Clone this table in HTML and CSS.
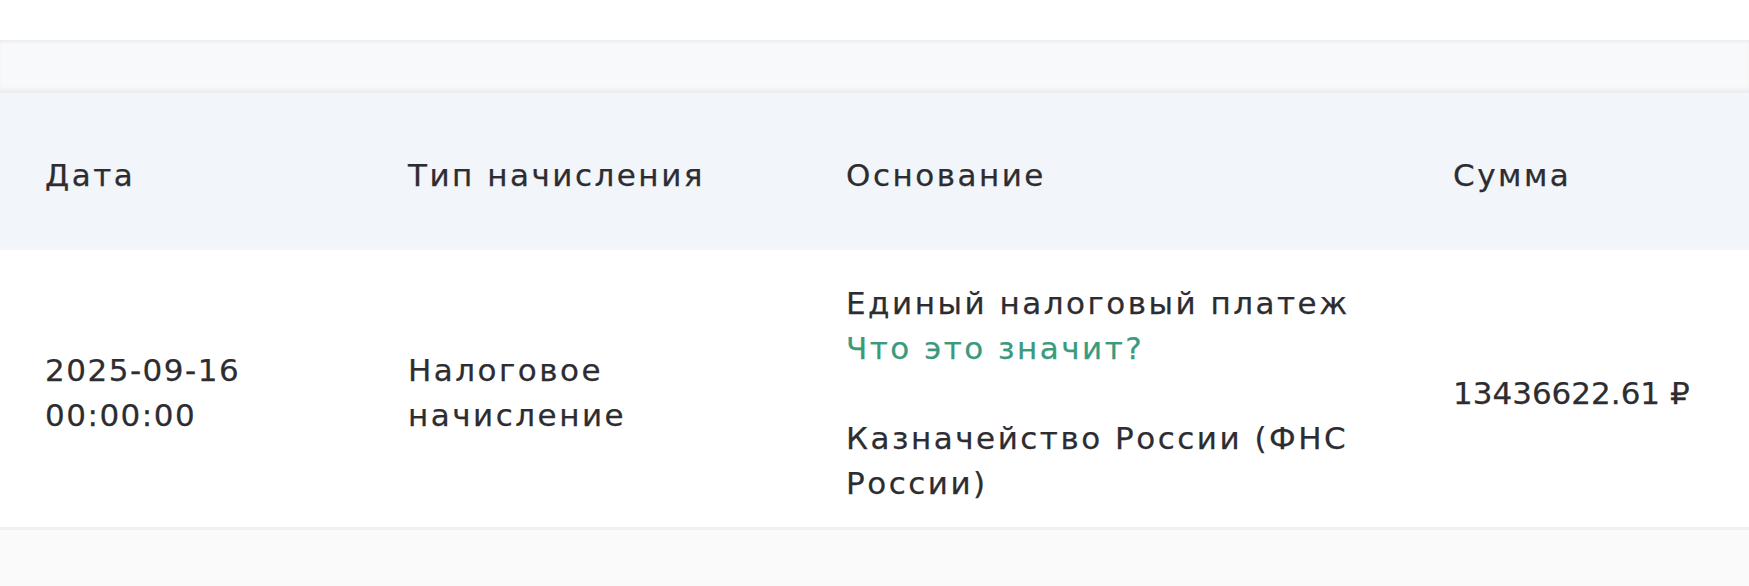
FILE: index.html
```html
<!DOCTYPE html>
<html lang="ru">
<head>
<meta charset="utf-8">
<title>Начисления</title>
<link rel="stylesheet" href="styles.css">
</head>
<body>
<div class="top-space"></div>
<div class="band"></div>
<table class="charges">
  <thead>
    <tr>
      <th class="c-date">Дата</th>
      <th class="c-type">Тип начисления</th>
      <th class="c-basis">Основание</th>
      <th class="c-sum">Сумма</th>
    </tr>
  </thead>
  <tbody>
    <tr>
      <td class="c-date num">2025-09-16<br>00:00:00</td>
      <td class="c-type">Налоговое<br>начисление</td>
      <td class="c-basis">
        <div>Единый налоговый платеж</div>
        <a class="hint" href="#">Что это значит?</a>
        <div class="payee">Казначейство России (ФНС<br>России)</div>
      </td>
      <td class="c-sum amount">13436622.61 ₽</td>
    </tr>
  </tbody>
</table>
<div class="bottom-band"></div>
</body>
</html>
```
FILE: styles.css
```css
html, body {
  margin: 0;
  padding: 0;
  background: #ffffff;
  overflow: hidden;
}
body {
  font-family: "DejaVu Sans", "Noto Sans", sans-serif;
  font-size: 31px;
  line-height: 45px;
  letter-spacing: 2.5px;
  color: #2d2d31;
  -webkit-text-stroke: 0.25px #2d2d31;
  width: 1749px;
  height: 586px;
}
.top-space {
  height: 40px;
}
.band {
  height: 53px;
  background: #f8f9fb;
  box-shadow: inset 0 3px 3px -1px #ebecee, inset 0 -5px 4px -2px #e9eaed;
}
.charges {
  width: 100%;
  border-collapse: collapse;
  table-layout: fixed;
}
.charges th,
.charges td {
  text-align: left;
  vertical-align: middle;
  padding: 0 0 0 45px;
  font-weight: normal;
}
.charges thead tr {
  background: #f2f5fa;
}
.charges th {
  height: 149px;
  padding-top: 8px;
}
.charges td {
  height: 268px;
  padding-top: 9px;
}
.c-date { width: 318px; }
.c-type { width: 393px; }
.c-basis { width: 562px; }
.c-sum { width: auto; }
.num {
  letter-spacing: 1.5px;
}
.amount {
  letter-spacing: 0;
}
.hint {
  display: block;
  color: #3a9a7c;
  -webkit-text-stroke: 0.25px #3a9a7c;
  text-decoration: none;
}
.payee {
  margin-top: 45px;
}
.bottom-band {
  height: 59px;
  background: #fafafa;
  border-top: 3px solid #f0f0f0;
}
```
